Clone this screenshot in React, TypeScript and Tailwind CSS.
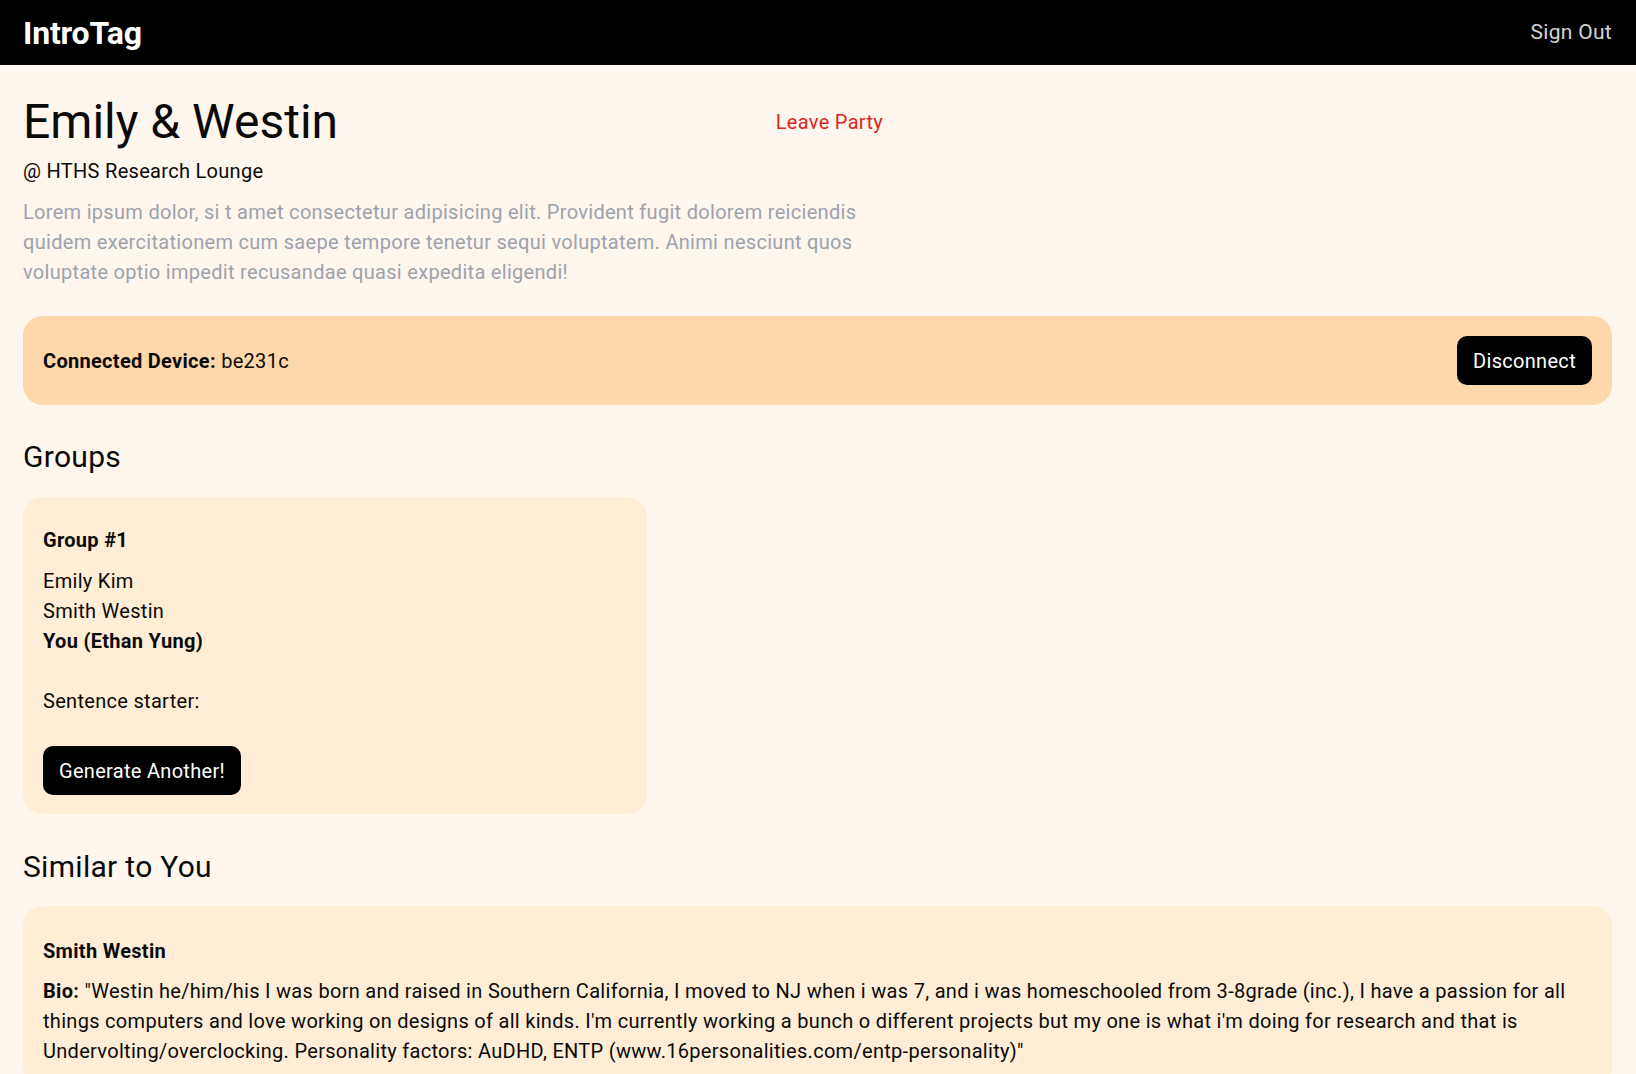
import React from "react";

const members = ["Emily Kim", "Smith Westin"];

export default function App() {
  return (
    <div className="min-h-screen bg-[#fff6ed] font-['Roboto',sans-serif] tracking-[0.3px] text-[#0a0a0a]">
      <header className="flex h-[65px] items-center justify-between bg-black pl-[23px] pr-6">
        <span className="text-[32px] font-bold tracking-[-0.2px] text-white">IntroTag</span>
        <button className="text-[21px] text-[#d4d4d4]">Sign Out</button>
      </header>

      <main className="px-[23px] pr-6 pt-[33px]">
        <div className="w-[860px]">
          <div className="flex items-center justify-between">
            <h1 className="text-[48px] leading-[48px] tracking-normal">Emily &amp; Westin</h1>
            <button className="text-[20px] text-[#dc2626]">Leave Party</button>
          </div>
          <p className="mt-[10px] text-[20px] leading-[30px]">@ HTHS Research Lounge</p>
          <p className="mt-[11px] text-[20px] leading-[30px] text-[#9ca3af]">
            Lorem ipsum dolor, si t amet consectetur adipisicing elit. Provident fugit dolorem reiciendis
            quidem exercitationem cum saepe tempore tenetur sequi voluptatem. Animi nesciunt quos
            voluptate optio impedit recusandae quasi expedita eligendi!
          </p>
        </div>

        <div className="mt-[29px] flex items-center justify-between rounded-[20px] bg-[#fed7aa] p-5">
          <p className="text-[20px] leading-[30px]">
            <span className="font-bold">Connected Device:</span> be231c
          </p>
          <button className="h-[49px] rounded-[10px] bg-black px-4 text-[20px] text-white">
            Disconnect
          </button>
        </div>

        <h2 className="mt-[34px] text-[30px] leading-[36px]">Groups</h2>
        <div className="mt-[22px] w-[624px] rounded-[20px] bg-[#ffedd5] px-5 pb-[19px] pt-7">
          <h3 className="text-[20px] font-bold leading-[30px]">Group #1</h3>
          <ul className="mt-[11px] text-[20px] leading-[30px]">
            {members.map((m) => (
              <li key={m}>{m}</li>
            ))}
            <li className="font-bold">You (Ethan Yung)</li>
          </ul>
          <p className="mt-[30px] text-[20px] leading-[30px]">Sentence starter:</p>
          <button className="mt-[30px] h-[49px] rounded-[10px] bg-black px-4 text-[20px] text-white">
            Generate Another!
          </button>
        </div>

        <h2 className="mt-[35px] text-[30px] leading-[36px]">Similar to You</h2>
        <div className="mt-[21px] rounded-[20px] bg-[#ffedd5] px-5 pb-5 pt-[30px]">
          <h3 className="text-[20px] font-bold leading-[30px]">Smith Westin</h3>
          <p className="mt-[10px] text-[20px] leading-[30px]">
            <span className="font-bold">Bio:</span> "Westin he/him/his I was born and raised in Southern
            California, I moved to NJ when i was 7, and i was homeschooled from 3-8grade (inc.), I have a
            passion for all things computers and love working on designs of all kinds. I'm currently working
            a bunch o different projects but my one is what i'm doing for research and that is
            Undervolting/overclocking. Personality factors: AuDHD, ENTP (www.16personalities.com/entp-personality)"
          </p>
        </div>
      </main>
    </div>
  );
}
